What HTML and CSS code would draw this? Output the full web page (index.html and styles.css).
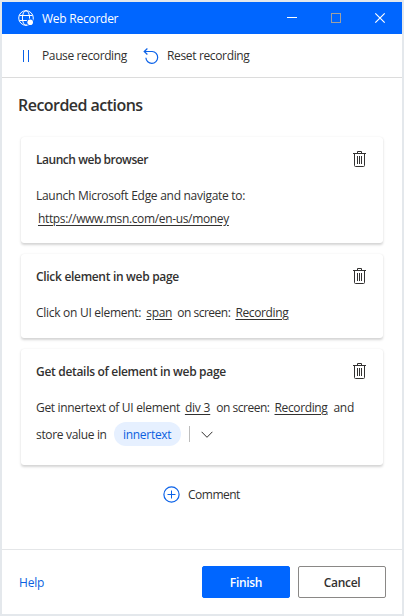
FILE: index.html
```html
<!DOCTYPE html>
<html lang="en">
<head>
<meta charset="utf-8">
<title>Web Recorder</title>
<link rel="stylesheet" href="styles.css">
</head>
<body>
<svg class="defs" width="0" height="0" aria-hidden="true">
  <symbol id="trash" viewBox="0 0 14 16">
    <path d="M0 2.5h13M4.5 2V.5h4V2M1.5 3v11.5q0 1 1 1h8q1 0 1-1V3M4.5 5v8M6.5 5v8M8.5 5v8" fill="none" stroke="#323130"/>
  </symbol>
</svg>
<div class="window">
  <header class="titlebar">
    <svg class="globe" width="17" height="17" viewBox="0 0 17 17" fill="none" stroke="#fff">
      <circle cx="8" cy="8" r="7.3"/>
      <ellipse cx="8" cy="8" rx="3.6" ry="7.3"/>
      <path d="M1.4 5.5h13.2M1.4 10.5h13.2"/>
      <circle cx="12.2" cy="12.2" r="3.6" fill="#0066ff" stroke="none"/>
      <circle cx="12.2" cy="12.2" r="2.8" fill="#fff" stroke="none"/>
    </svg>
    <span class="app-name">Web Recorder</span>
    <svg class="controls" width="100" height="12" viewBox="0 0 100 12" fill="none">
      <path d="M0 5.5h10" stroke="#fff"/>
      <rect x="44.5" y="1.5" width="9" height="9" stroke="#a0a0a0"/>
      <path d="M88.3 1.3l9.4 9.4M97.7 1.3l-9.4 9.4" stroke="#fff" stroke-width="1.2"/>
    </svg>
  </header>
  <nav class="toolbar">
    <svg class="pause" width="8" height="12" viewBox="0 0 8 12"><path d="M1.5 0v12M6.5 0v12" stroke="#0b62e8"/></svg>
    <span class="t-pause">Pause recording</span>
    <svg class="reset" width="16" height="16" viewBox="0 0 16 16" fill="none" stroke="#0b62e8" stroke-width="1.2"><path d="M4.4.5L1.2 3.5l3.2 3M1.2 3.5H9.2a5.9 5.9 0 1 1-6.3 6.2"/></svg>
    <span class="t-reset">Reset recording</span>
  </nav>
  <main class="content">
    <h1>Recorded actions</h1>
    <section class="card card-launch">
      <div class="card-head"><h2 class="h-launch">Launch web browser</h2><svg width="14" height="16"><use href="#trash"/></svg></div>
      <p class="line"><span class="s-launch">Launch Microsoft Edge and navigate to:</span></p>
      <p class="line url"><u class="s-url">https://www.msn.com/en-us/money</u></p>
    </section>
    <section class="card card-click">
      <div class="card-head"><h2>Click element in web page</h2><svg width="14" height="16"><use href="#trash"/></svg></div>
      <p class="line"><span class="s-click">Click on UI element:</span><u class="s-span">span</u><span class="s-on">on screen:</span><u class="s-rec">Recording</u></p>
    </section>
    <section class="card card-get">
      <div class="card-head"><h2>Get details of element in web page</h2><svg width="14" height="16"><use href="#trash"/></svg></div>
      <p class="line"><span class="s-get">Get innertext of UI element</span><u class="s-div">div 3</u><span class="s-on">on screen:</span><u class="s-rec">Recording</u><span class="s-and">and</span></p>
      <p class="line store"><span class="s-store">store value in</span><span class="pill">innertext</span><i class="divider"></i><svg width="12" height="8" viewBox="0 0 12 8"><path d="M.6.8L6 6.3 11.4.8" fill="none" stroke="#323130"/></svg></p>
    </section>
    <div class="comment">
      <svg width="17" height="17" viewBox="0 0 17 17" fill="none" stroke="#0b62e8"><circle cx="8.5" cy="8.5" r="7.6" stroke-width="1.2"/><path d="M8.5 4.5v8M4.5 8.5h8"/></svg>
      <span class="t-comment">Comment</span>
    </div>
  </main>
  <footer class="footer">
    <a class="help">Help</a>
    <button class="btn primary">Finish</button>
    <button class="btn">Cancel</button>
  </footer>
</div>
</body>
</html>
```
FILE: styles.css
```css
* { box-sizing: border-box; margin: 0; padding: 0; }
body {
  width: 404px; height: 616px; padding: 2px; overflow: hidden;
  background: #e4e8ec; color: #323130;
  font: 12px/16px "Open Sans", "Noto Sans", sans-serif;
  white-space: nowrap;
}
.defs { position: absolute; }
svg { display: block; flex: none; }
.window { width: 400px; height: 612px; background: #fff; display: flex; flex-direction: column; }
.titlebar { height: 32px; background: #0066ff; color: #fff; display: flex; align-items: center; padding: 0 16px; }
.app-name { margin-left: 7px; padding-top: 2px; letter-spacing: -.25px; }
.controls { margin-left: auto; margin-right: -1px; }
.toolbar { height: 44px; border-bottom: 1px solid #dcdcdc; display: flex; align-items: center; padding-left: 20px; }
.pause { margin-left: -.5px; margin-right: .5px; }
.t-pause { margin-left: 12px; padding-top: 1px; width: 85px; letter-spacing: -.38px; }
.reset { margin-left: 16px; }
.t-reset { margin-left: 8px; padding-top: 1px; letter-spacing: -.35px; }
.content { height: 471px; padding: 0 19px; }
h1 { font-size: 16px; line-height: 22px; font-weight: 600; margin: 16px 0 21px -3px; letter-spacing: -.53px; }
.card { border-radius: 3px; padding: 14px 16px 0 15px; margin-bottom: 11px; box-shadow: 0 1.5px 2.5px rgba(0,0,0,.17), 0 0 1px rgba(0,0,0,.06); }
.card-launch { height: 106px; }
.card-click { height: 84px; }
.card-get { height: 116px; }
.card-head { display: flex; height: 16px; align-items: center; justify-content: space-between; margin-bottom: 21px; }
h2 { font-size: 12px; line-height: 16px; font-weight: 600; padding-top: 2px; letter-spacing: -.31px; }
h2.h-launch { letter-spacing: -.47px; }
.line { display: flex; align-items: center; height: 16px; letter-spacing: -.25px; }
.line u { text-underline-offset: 2px; margin: 0 6px 0 5px; }
.s-launch { letter-spacing: -.28px; }
.line .s-url { letter-spacing: -.35px; }
.s-click { letter-spacing: -.28px; }
.line .s-span { margin-right: 5px; letter-spacing: -.3px; }
.s-on { letter-spacing: -.48px; }
.s-rec { letter-spacing: -.37px; }
.s-get { letter-spacing: -.32px; }
.s-div { letter-spacing: -.2px; }
.url { margin-top: 7px; }
.line.url u { margin-left: 2px; }
.store { height: 24px; margin-top: 7px; }
.s-store { letter-spacing: -.33px; }
.pill { margin-left: 7px; margin-top: -2px; width: 67px; height: 24px; line-height: 25px; border-radius: 12px; background: #e6f0ff; color: #0b5fe0; text-align: center; letter-spacing: -.3px; }
.divider { width: 1px; height: 16px; background: #bdbdbd; margin: -2px 11px 0 8px; }
.comment { display: flex; align-items: center; margin: 20px 0 0 142px; }
.t-comment { margin-left: 8px; padding-top: 2px; letter-spacing: -.5px; }
.footer { height: 65px; border-top: 1px solid #e4e6e8; display: flex; align-items: center; padding: 0 16px 0 17px; gap: 8px; }
.help { color: #0b5fe0; margin-right: auto; padding-top: 2px; letter-spacing: -.2px; }
.btn { width: 88px; height: 32px; border: 1px solid #8a8886; border-radius: 2px; background: #fff; color: #323130; font: 600 12px/16px "Open Sans", sans-serif; letter-spacing: -.3px; padding-top: 2px; }
.primary { background: #0066ff; border-color: #0066ff; color: #fff; }
```
